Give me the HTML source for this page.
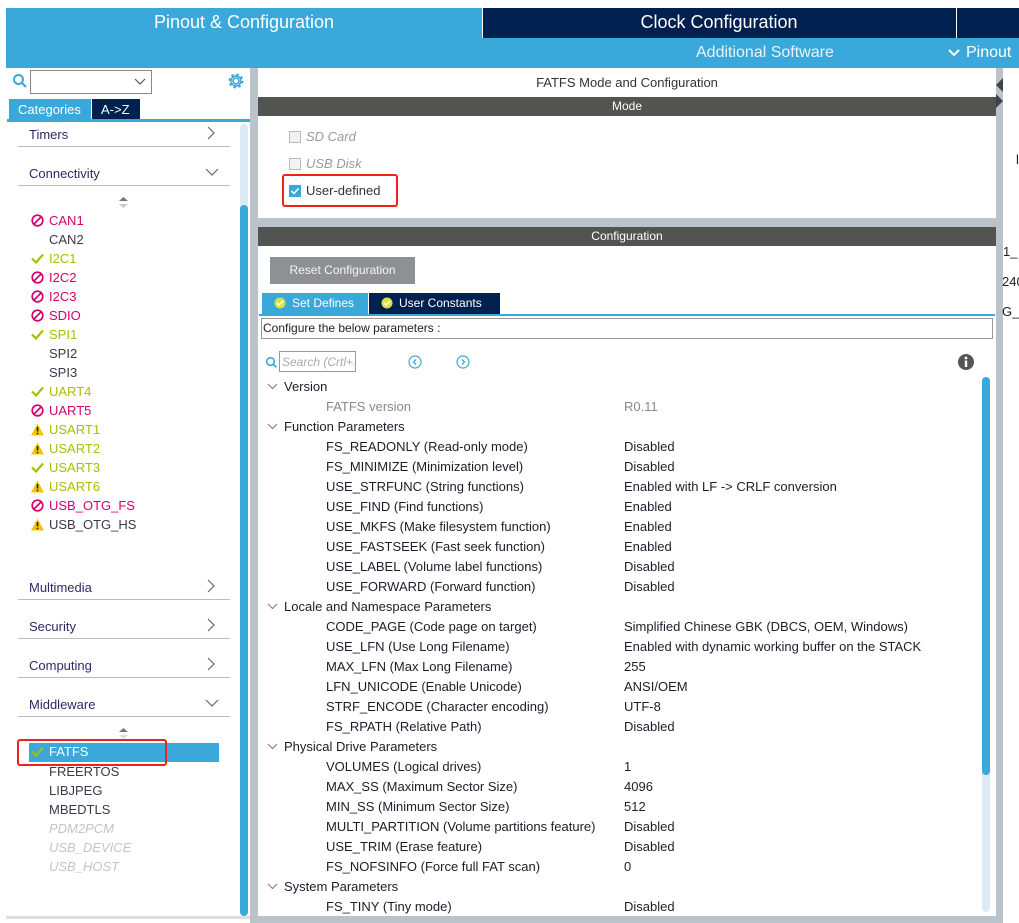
<!DOCTYPE html>
<html><head><meta charset="utf-8"><style>
*{margin:0;padding:0;box-sizing:border-box}
body{width:1019px;height:923px;background:#fff;position:relative;overflow:hidden;font-family:"Liberation Sans",Arial,sans-serif;font-size:13px;color:#1d1d2b}
div,span,svg{position:absolute}
.t{white-space:nowrap}
.li{left:49px;white-space:nowrap;font-size:13px}
.ic{left:31px;width:13px;height:13px;position:absolute}
.mag{color:#d4006f}.grn{color:#a8be00}.dk{color:#3a3a4a}.gry{color:#c4c4c8;font-style:italic}
.cat{left:29px;color:#2b2b66;font-size:13px}
.ln{left:18px;width:212px;height:1px;background:#bbb}
.r{white-space:nowrap;font-size:13px}
.n{left:326px}.v{left:624px}
.h{left:284px}
</style></head><body>
<!-- top bars -->
<div style="left:6px;top:8px;width:476px;height:30px;background:#3aa8da"></div>
<div class="t" style="left:6px;top:12px;width:476px;text-align:center;color:#fff;font-size:18px">Pinout &amp; Configuration</div>
<div style="left:482px;top:8px;width:474px;height:30px;background:#00204f;border-left:1px solid #fff"></div>
<div class="t" style="left:482px;top:12px;width:474px;text-align:center;color:#fff;font-size:18px">Clock Configuration</div>
<div style="left:957px;top:8px;width:62px;height:30px;background:#00204f"></div>
<div style="left:6px;top:38px;width:1013px;height:30px;background:#3aa8da"></div>
<div class="t" style="left:696px;top:44px;color:#e8f4fb;font-size:16px">Additional Software</div>
<svg style="left:947px;top:48px" width="14" height="10"><path d="M2 2l5 5 5-5" stroke="#fff" stroke-width="2" fill="none"/></svg>
<div class="t" style="left:966px;top:44px;color:#fff;font-size:16px">Pinout</div>

<!-- left panel -->
<div style="left:6px;top:68px;width:244px;height:855px;background:#fff"></div>
<svg style="left:12px;top:73px" width="16" height="16"><circle cx="6.5" cy="6.5" r="4.5" stroke="#3aa8da" stroke-width="2" fill="none"/><path d="M10 10l4 4" stroke="#3aa8da" stroke-width="2.2"/></svg>
<div style="left:30px;top:70px;width:122px;height:24px;border:1px solid #888;background:#fff"></div>
<svg style="left:134px;top:78px" width="12" height="8"><path d="M1 1l5 5 5-5" stroke="#555" stroke-width="1.2" fill="none"/></svg>
<svg style="left:227px;top:72px" width="18" height="18" viewBox="0 0 18 18"><circle cx="9" cy="9" r="3" stroke="#3aa8da" stroke-width="1.6" fill="none"/><circle cx="9" cy="9" r="6.3" stroke="#3aa8da" stroke-width="2.4" fill="none" stroke-dasharray="2.4 2.55"/><circle cx="9" cy="9" r="5" stroke="#3aa8da" stroke-width="1.4" fill="none"/></svg>
<div style="left:9px;top:99px;width:82px;height:21px;background:#3aa8da"></div>
<div class="t" style="left:18px;top:102px;color:#fff;font-size:13px">Categories</div>
<div style="left:92px;top:99px;width:48px;height:21px;background:#00204f"></div>
<div class="t" style="left:101px;top:102px;color:#fff;font-size:13px">A-&gt;Z</div>
<div style="left:7px;top:119px;width:243px;height:3px;background:#3aa8da"></div>
<div style="left:240px;top:124px;width:8px;height:792px;background:#ddeaf5;border-radius:4px"></div>
<div style="left:240px;top:205px;width:8px;height:711px;background:#3aa8da;border-radius:4px"></div>
<div style="left:6px;top:916px;width:244px;height:3px;background:#ddd"></div>

<div class="t cat" style="top:127px">Timers</div>
<svg style="left:206px;top:126px" width="10" height="14"><path d="M2 1l6 6-6 6" stroke="#666" stroke-width="1.2" fill="none"/></svg>
<div class="ln" style="top:146px"></div>
<div class="t cat" style="top:166px">Connectivity</div>
<svg style="left:205px;top:168px" width="14" height="9"><path d="M1 1l6 6 6-6" stroke="#666" stroke-width="1.2" fill="none"/></svg>
<div class="ln" style="top:185px"></div>
<svg style="left:119px;top:197px" width="9" height="12"><path d="M0 4l4.5-4 4.5 4z" fill="#777"/><path d="M0 7l4.5 4 4.5-4z" fill="#ccc"/></svg>

<svg width="0" height="0" style="left:0;top:0"><defs>
<g id="no"><circle cx="6.5" cy="6.5" r="5.3" stroke="#d4006f" stroke-width="1.7" fill="none"/><path d="M3 10L10 3" stroke="#d4006f" stroke-width="1.7"/></g>
<g id="ok"><path d="M1 6.5l4 4L12 2.5" stroke="#a8be00" stroke-width="2.2" fill="none"/></g>
<g id="wn"><path d="M6.5 0.5L13 12.5H0z" fill="#f5c400"/><path d="M6.5 4v4.5" stroke="#222" stroke-width="1.6"/><circle cx="6.5" cy="10.5" r=".9" fill="#222"/></g>
<path id="dn" d="M1 1l4.5 4.5L10 1" stroke="#777" stroke-width="1" fill="none"/>
</defs></svg>
<svg class="ic" style="top:214px"><use href="#no"/></svg><div class="li mag" style="top:213px">CAN1</div>
<div class="li dk" style="top:232px">CAN2</div>
<svg class="ic" style="top:252px"><use href="#ok"/></svg><div class="li grn" style="top:251px">I2C1</div>
<svg class="ic" style="top:271px"><use href="#no"/></svg><div class="li mag" style="top:270px">I2C2</div>
<svg class="ic" style="top:290px"><use href="#no"/></svg><div class="li mag" style="top:289px">I2C3</div>
<svg class="ic" style="top:309px"><use href="#no"/></svg><div class="li mag" style="top:308px">SDIO</div>
<svg class="ic" style="top:328px"><use href="#ok"/></svg><div class="li grn" style="top:327px">SPI1</div>
<div class="li dk" style="top:346px">SPI2</div>
<div class="li dk" style="top:365px">SPI3</div>
<svg class="ic" style="top:385px"><use href="#ok"/></svg><div class="li grn" style="top:384px">UART4</div>
<svg class="ic" style="top:404px"><use href="#no"/></svg><div class="li mag" style="top:403px">UART5</div>
<svg class="ic" style="top:423px"><use href="#wn"/></svg><div class="li grn" style="top:422px">USART1</div>
<svg class="ic" style="top:442px"><use href="#wn"/></svg><div class="li grn" style="top:441px">USART2</div>
<svg class="ic" style="top:461px"><use href="#ok"/></svg><div class="li grn" style="top:460px">USART3</div>
<svg class="ic" style="top:480px"><use href="#wn"/></svg><div class="li grn" style="top:479px">USART6</div>
<svg class="ic" style="top:499px"><use href="#no"/></svg><div class="li mag" style="top:498px">USB_OTG_FS</div>
<svg class="ic" style="top:518px"><use href="#wn"/></svg><div class="li dk" style="top:517px">USB_OTG_HS</div>

<div class="t cat" style="top:580px">Multimedia</div>
<svg style="left:206px;top:579px" width="10" height="14"><path d="M2 1l6 6-6 6" stroke="#666" stroke-width="1.2" fill="none"/></svg>
<div class="ln" style="top:599px"></div>
<div class="t cat" style="top:619px">Security</div>
<svg style="left:206px;top:618px" width="10" height="14"><path d="M2 1l6 6-6 6" stroke="#666" stroke-width="1.2" fill="none"/></svg>
<div class="ln" style="top:638px"></div>
<div class="t cat" style="top:658px">Computing</div>
<svg style="left:206px;top:657px" width="10" height="14"><path d="M2 1l6 6-6 6" stroke="#666" stroke-width="1.2" fill="none"/></svg>
<div class="ln" style="top:677px"></div>
<div class="t cat" style="top:697px">Middleware</div>
<svg style="left:205px;top:699px" width="14" height="9"><path d="M1 1l6 6 6-6" stroke="#666" stroke-width="1.2" fill="none"/></svg>
<div class="ln" style="top:716px"></div>
<svg style="left:119px;top:728px" width="9" height="12"><path d="M0 4l4.5-4 4.5 4z" fill="#777"/><path d="M0 7l4.5 4 4.5-4z" fill="#ddd"/></svg>
<div style="left:29px;top:743px;width:190px;height:19px;background:#3aa8da"></div>
<svg class="ic" style="top:745px"><use href="#ok"/></svg><div class="li" style="top:744px;color:#fff">FATFS</div>
<div style="left:17px;top:739px;width:150px;height:27px;border:2px solid #f0201a;border-radius:3px"></div>
<div class="li dk" style="top:764px">FREERTOS</div>
<div class="li dk" style="top:783px">LIBJPEG</div>
<div class="li dk" style="top:802px">MBEDTLS</div>
<div class="li gry" style="top:821px">PDM2PCM</div>
<div class="li gry" style="top:840px">USB_DEVICE</div>
<div class="li gry" style="top:859px">USB_HOST</div>

<!-- divider -->
<div style="left:250px;top:68px;width:8px;height:855px;background:#b9c3c9"></div>
<div style="left:996px;top:68px;width:7px;height:855px;background:#b9c3c9"></div>
<svg style="left:996px;top:78px" width="7" height="30"><path d="M7 0v14L0 7z" fill="#444"/><path d="M0 16v14l7-7z" fill="#444"/></svg>
<div class="t" style="left:1016px;top:152px">l</div>
<div class="t" style="left:1003px;top:244px">1_</div>
<div class="t" style="left:1002px;top:274px">240</div>
<div class="t" style="left:1002px;top:304px">G_</div>

<!-- right panel -->
<div class="t" style="left:258px;top:75px;width:738px;text-align:center;color:#333">FATFS Mode and Configuration</div>
<div style="left:258px;top:97px;width:738px;height:19px;background:#525452"></div>
<div class="t" style="left:258px;top:99px;width:738px;text-align:center;color:#fff;font-size:12px">Mode</div>
<div style="left:289px;top:131px;width:12px;height:12px;border:1px solid #bbb;background:#f2f2f2"></div>
<div class="t" style="left:306px;top:129px;color:#999;font-style:italic">SD Card</div>
<div style="left:289px;top:158px;width:12px;height:12px;border:1px solid #bbb;background:#f2f2f2"></div>
<div class="t" style="left:306px;top:156px;color:#999;font-style:italic">USB Disk</div>
<div style="left:289px;top:185px;width:12px;height:12px;background:#3aa8da"></div>
<svg style="left:289px;top:185px" width="12" height="12"><path d="M2.5 6l2.5 2.5 4.5-5" stroke="#fff" stroke-width="1.6" fill="none"/></svg>
<div class="t" style="left:306px;top:183px;color:#333">User-defined</div>
<div style="left:282px;top:174px;width:116px;height:33px;border:2px solid #f0201a;border-radius:3px"></div>
<div style="left:258px;top:218px;width:738px;height:9px;background:#b9c3c9"></div>
<div style="left:258px;top:227px;width:738px;height:19px;background:#525452"></div>
<div class="t" style="left:258px;top:229px;width:738px;text-align:center;color:#fff;font-size:12px">Configuration</div>
<div style="left:270px;top:257px;width:145px;height:27px;background:#8e9193"></div>
<div class="t" style="left:270px;top:263px;width:145px;text-align:center;color:#f4f4f4;font-size:12px">Reset Configuration</div>
<div style="left:262px;top:293px;width:106px;height:21px;background:#3aa8da"></div>
<div style="left:369px;top:293px;width:131px;height:21px;background:#00204f"></div>
<svg style="left:274px;top:297px" width="12" height="12"><circle cx="6" cy="6" r="5.5" fill="#d8e246"/><path d="M3 6l2 2 4-4" stroke="#fff" stroke-width="1.5" fill="none"/></svg>
<svg style="left:381px;top:297px" width="12" height="12"><circle cx="6" cy="6" r="5.5" fill="#d8e246"/><path d="M3 6l2 2 4-4" stroke="#fff" stroke-width="1.5" fill="none"/></svg>
<div class="t" style="left:292px;top:296px;color:#fff;font-size:12px">Set Defines</div>
<div class="t" style="left:399px;top:296px;color:#fff;font-size:12px">User Constants</div>
<div style="left:259px;top:314px;width:736px;height:2px;background:#3aa8da"></div>
<div style="left:261px;top:318px;width:732px;height:21px;border:1px solid #999"></div>
<div class="t" style="left:263px;top:321px;color:#222;font-size:12px">Configure the below parameters :</div>
<svg style="left:265px;top:356px" width="13" height="13"><circle cx="5.5" cy="5.5" r="3.8" stroke="#3aa8da" stroke-width="1.6" fill="none"/><path d="M8.3 8.3l3 3" stroke="#3aa8da" stroke-width="1.8"/></svg>
<div style="left:279px;top:351px;width:77px;height:21px;border:1px solid #999"></div>
<div class="t" style="left:282px;top:355px;color:#aaa;font-style:italic;font-size:12px;width:72px;overflow:hidden">Search (Crtl+F)</div>
<svg style="left:408px;top:355px" width="14" height="14"><circle cx="7" cy="7" r="6" stroke="#3aa8da" stroke-width="1.2" fill="none"/><path d="M8 4.5L5.5 7 8 9.5" stroke="#3aa8da" stroke-width="1.3" fill="none"/></svg>
<svg style="left:456px;top:355px" width="14" height="14"><circle cx="7" cy="7" r="6" stroke="#3aa8da" stroke-width="1.2" fill="none"/><path d="M6 4.5L8.5 7 6 9.5" stroke="#3aa8da" stroke-width="1.3" fill="none"/></svg>
<svg style="left:958px;top:354px" width="16" height="16"><circle cx="8" cy="8" r="8" fill="#555"/><rect x="6.8" y="6.5" width="2.4" height="6.5" fill="#fff"/><circle cx="8" cy="4" r="1.4" fill="#fff"/></svg>
<div style="left:982px;top:377px;width:8px;height:535px;background:#ddeaf5;border-radius:4px"></div>
<div style="left:982px;top:377px;width:8px;height:398px;background:#3aa8da;border-radius:4px"></div>
<div style="left:258px;top:916px;width:738px;height:7px;background:#b9c3c9"></div>

<!-- parameter rows -->
<svg style="left:267px;top:383px" width="11" height="7"><use href="#dn"/></svg><div class="r h" style="top:379px">Version</div>
<div class="r n" style="top:399px;color:#888">FATFS version</div><div class="r v" style="top:399px;color:#888">R0.11</div>
<svg style="left:267px;top:423px" width="11" height="7"><use href="#dn"/></svg><div class="r h" style="top:419px">Function Parameters</div>
<div class="r n" style="top:439px">FS_READONLY (Read-only mode)</div><div class="r v" style="top:439px">Disabled</div>
<div class="r n" style="top:459px">FS_MINIMIZE (Minimization level)</div><div class="r v" style="top:459px">Disabled</div>
<div class="r n" style="top:479px">USE_STRFUNC (String functions)</div><div class="r v" style="top:479px">Enabled with LF -&gt; CRLF conversion</div>
<div class="r n" style="top:499px">USE_FIND (Find functions)</div><div class="r v" style="top:499px">Enabled</div>
<div class="r n" style="top:519px">USE_MKFS (Make filesystem function)</div><div class="r v" style="top:519px">Enabled</div>
<div class="r n" style="top:539px">USE_FASTSEEK (Fast seek function)</div><div class="r v" style="top:539px">Enabled</div>
<div class="r n" style="top:559px">USE_LABEL (Volume label functions)</div><div class="r v" style="top:559px">Disabled</div>
<div class="r n" style="top:579px">USE_FORWARD (Forward function)</div><div class="r v" style="top:579px">Disabled</div>
<svg style="left:267px;top:603px" width="11" height="7"><use href="#dn"/></svg><div class="r h" style="top:599px">Locale and Namespace Parameters</div>
<div class="r n" style="top:619px">CODE_PAGE (Code page on target)</div><div class="r v" style="top:619px">Simplified Chinese GBK (DBCS, OEM, Windows)</div>
<div class="r n" style="top:639px">USE_LFN (Use Long Filename)</div><div class="r v" style="top:639px">Enabled with dynamic working buffer on the STACK</div>
<div class="r n" style="top:659px">MAX_LFN (Max Long Filename)</div><div class="r v" style="top:659px">255</div>
<div class="r n" style="top:679px">LFN_UNICODE (Enable Unicode)</div><div class="r v" style="top:679px">ANSI/OEM</div>
<div class="r n" style="top:699px">STRF_ENCODE (Character encoding)</div><div class="r v" style="top:699px">UTF-8</div>
<div class="r n" style="top:719px">FS_RPATH (Relative Path)</div><div class="r v" style="top:719px">Disabled</div>
<svg style="left:267px;top:743px" width="11" height="7"><use href="#dn"/></svg><div class="r h" style="top:739px">Physical Drive Parameters</div>
<div class="r n" style="top:759px">VOLUMES (Logical drives)</div><div class="r v" style="top:759px">1</div>
<div class="r n" style="top:779px">MAX_SS (Maximum Sector Size)</div><div class="r v" style="top:779px">4096</div>
<div class="r n" style="top:799px">MIN_SS (Minimum Sector Size)</div><div class="r v" style="top:799px">512</div>
<div class="r n" style="top:819px">MULTI_PARTITION (Volume partitions feature)</div><div class="r v" style="top:819px">Disabled</div>
<div class="r n" style="top:839px">USE_TRIM (Erase feature)</div><div class="r v" style="top:839px">Disabled</div>
<div class="r n" style="top:859px">FS_NOFSINFO (Force full FAT scan)</div><div class="r v" style="top:859px">0</div>
<svg style="left:267px;top:883px" width="11" height="7"><use href="#dn"/></svg><div class="r h" style="top:879px">System Parameters</div>
<div class="r n" style="top:899px">FS_TINY (Tiny mode)</div><div class="r v" style="top:899px">Disabled</div>
</body></html>
